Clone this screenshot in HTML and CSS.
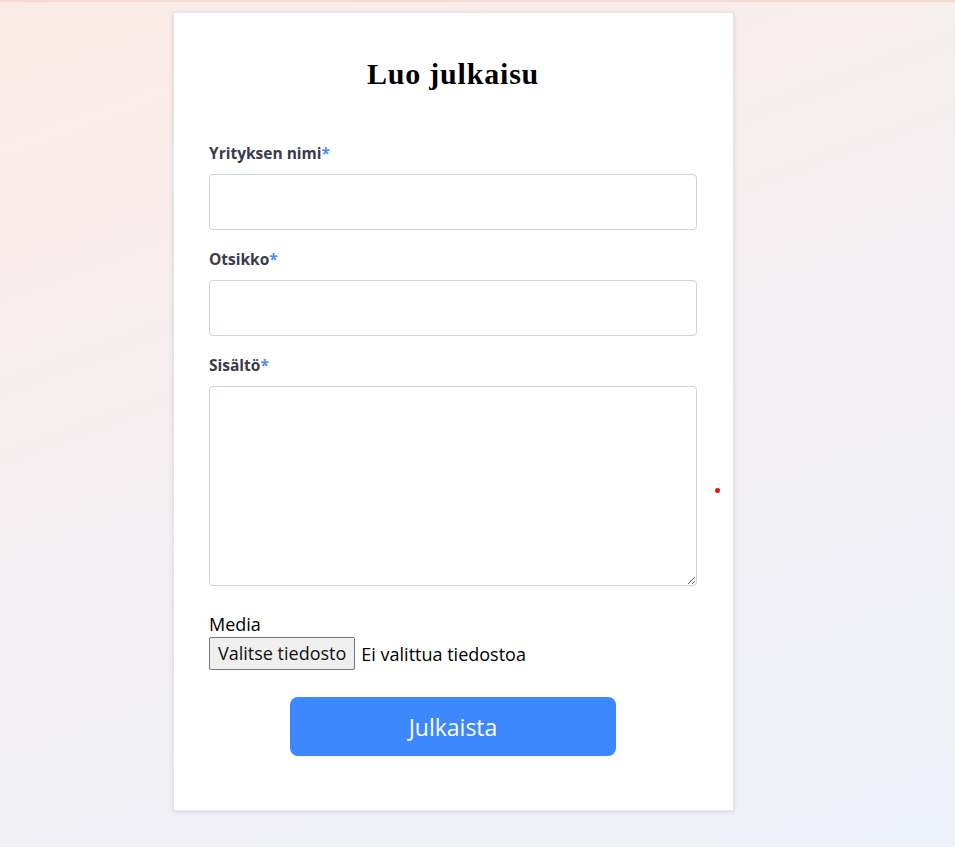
FILE: index.html
```html
<!DOCTYPE html>
<html lang="fi">
<head>
<meta charset="utf-8">
<title>Luo julkaisu</title>
<link rel="stylesheet" href="styles.css">
</head>
<body>
<div class="page">
  <form class="card">
    <h1 class="title">Luo julkaisu</h1>
    <div class="field">
      <label class="label">Yrityksen nimi<span class="req">*</span></label>
      <input class="input" type="text">
    </div>
    <div class="field">
      <label class="label">Otsikko<span class="req">*</span></label>
      <input class="input" type="text">
    </div>
    <div class="field">
      <label class="label">Sisältö<span class="req">*</span></label>
      <textarea class="textarea"></textarea>
    </div>
    <div class="media">
      <div class="media-label">Media</div>
      <div class="file-row">
        <span class="file-btn">Valitse tiedosto</span>
        <span class="file-text">Ei valittua tiedostoa</span>
      </div>
    </div>
    <div class="actions">
      <button type="button" class="submit">Julkaista</button>
    </div>
  </form>
</div>
<span class="dot"></span>
</body>
</html>
```
FILE: styles.css
```css
html, body {
  margin: 0;
  padding: 0;
}
body {
  min-height: 100vh;
  box-sizing: border-box;
  border-top: 2px solid #f7d8ce;
  background: linear-gradient(160deg, #fbebe6 0%, #f2eff3 55%, #edf1f9 100%);
  font-family: "Open Sans", "Noto Sans", sans-serif;
  position: relative;
}
.page {
  padding: 10px 0 36px 173px;
}
.card {
  width: 561px;
  box-sizing: border-box;
  background: #fff;
  border: 1px solid #e6e4e8;
  box-shadow: 0 1px 4px rgba(0, 0, 0, 0.12);
  padding: 36px 36px 54px 35px;
  display: flex;
  flex-direction: column;
}
.title {
  margin: 9px 0 53px 0;
  text-align: center;
  font-family: "Liberation Serif", "DejaVu Serif", serif;
  font-weight: 700;
  font-size: 30px;
  letter-spacing: 0.8px;
  line-height: 32px;
  color: #000;
}
.field {
  display: flex;
  flex-direction: column;
  margin-bottom: 19px;
}
.label {
  font-size: 15.5px;
  font-weight: 700;
  line-height: 20px;
  color: #3a3a4c;
  margin-bottom: 11px;
}
.req {
  color: #4f8df5;
}
.input {
  height: 56px;
  box-sizing: border-box;
  border: 1px solid #c9d4e1;
  border-radius: 4px;
  background: #fff;
  font-family: inherit;
  font-size: 16px;
  padding: 0 12px;
}
.textarea {
  height: 200px;
  box-sizing: border-box;
  border: 1px solid #c9d4e1;
  border-radius: 4px;
  font-family: inherit;
  font-size: 16px;
  padding: 12px;
  resize: vertical;
}
.media {
  margin-top: 7px;
  display: flex;
  flex-direction: column;
}
.media-label {
  font-size: 18px;
  line-height: 24px;
  color: #000;
}
.file-row {
  display: flex;
  align-items: center;
  gap: 6px;
  margin-top: 1px;
}
.file-btn {
  display: inline-block;
  height: 33px;
  box-sizing: border-box;
  padding: 0 8px;
  line-height: 31px;
  font-size: 18px;
  color: #111;
  background: #efefef;
  border: 1px solid #767676;
  border-radius: 2px;
}
.file-text {
  font-size: 18px;
  color: #000;
}
.actions {
  display: flex;
  justify-content: center;
  margin-top: 27px;
}
.submit {
  width: 326px;
  height: 59px;
  border: none;
  border-radius: 8px;
  background: #3d87ff;
  color: #fff;
  font-family: inherit;
  font-size: 23px;
  cursor: pointer;
}
.dot {
  position: absolute;
  left: 715px;
  top: 486px;
  width: 5px;
  height: 5px;
  border-radius: 50%;
  background: #e8141c;
}
```
